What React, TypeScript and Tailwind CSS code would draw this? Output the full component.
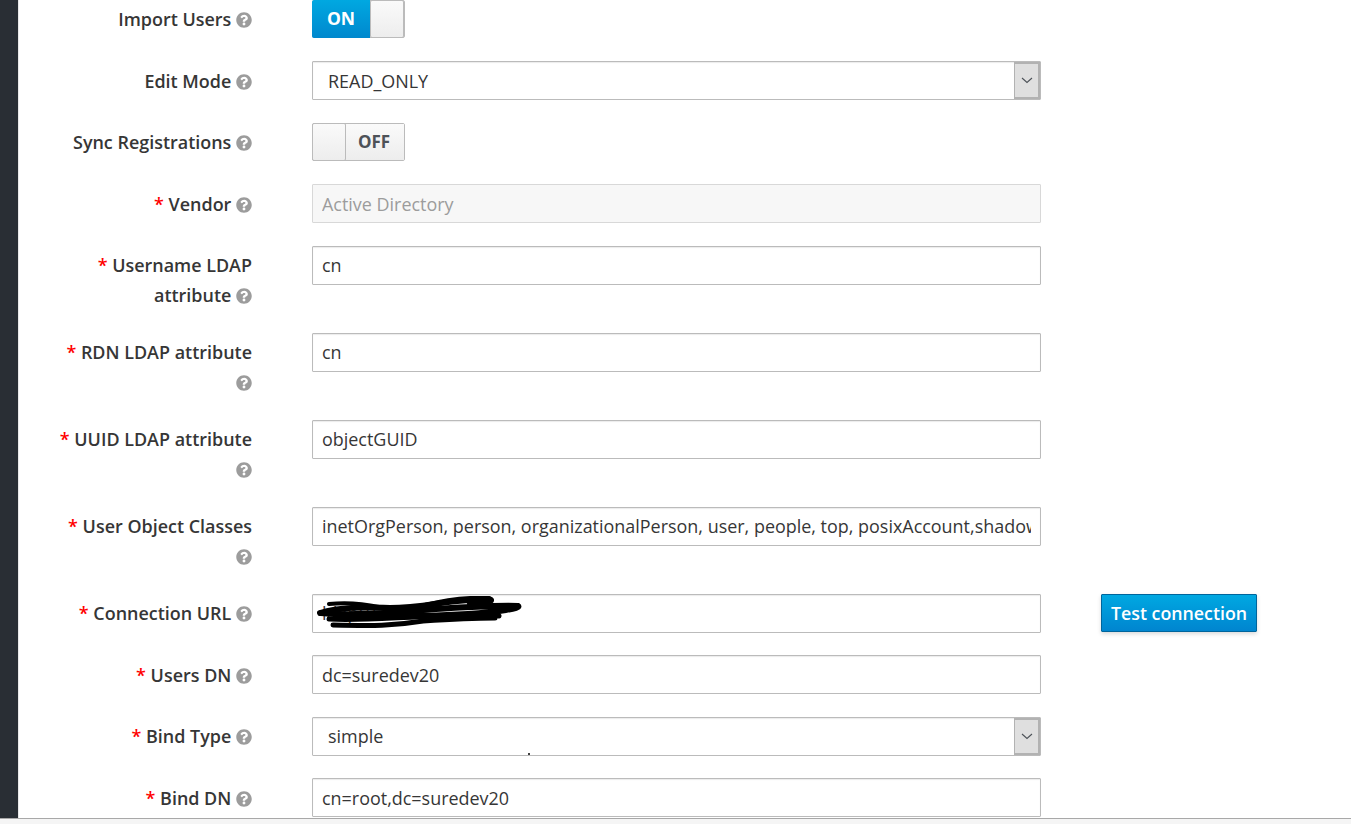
import React from "react";
import { FaQuestionCircle } from "react-icons/fa";

const inputBase = "h-[39px] w-[729px] border border-[#bbbbbb] rounded-[1px] text-[17.95px] leading-[37px] px-[9px] shadow-[inset_0_1px_1px_rgba(3,3,3,0.08)]";

function Label({ text, required, wrapIcon }: { text: React.ReactNode; required?: boolean; wrapIcon?: boolean }) {
  return (
    <label className="block w-[233px] shrink-0 text-right text-[17.95px] leading-[30px] font-semibold text-[#363636] pt-[4.45px] pb-[0.05px]">
      {required && <span className="text-[#ff0000]">* </span>}
      {text}
      {wrapIcon ? <br /> : " "}
      <FaQuestionCircle className="inline-block w-[16px] h-[16px] text-[#9c9c9c] align-[-2px]" />
    </label>
  );
}

function TextField({ value, disabled }: { value: string; disabled?: boolean }) {
  return (
    <div className={`${inputBase} ${disabled ? "bg-[#f7f7f7] text-[#9c9c9c] shadow-none border-[#d8d8d8]" : "bg-white text-[#363636]"}`}>
      <div className="overflow-hidden whitespace-nowrap pt-[0.45px]">{value}</div>
    </div>
  );
}

function SelectField({ value }: { value: string }) {
  return (
    <div className={`${inputBase} bg-white text-[#363636] flex justify-between !pr-0`}>
      <span className="pl-[6px] pt-[0.45px]">{value}</span>
      <span className="w-[26px] h-[37px] bg-[#dfdfdf] border-2 border-l border-[#b2b2b2] flex items-center justify-center">
        <svg width="12" height="7" viewBox="0 0 12 7" fill="none" stroke="#4d5258" strokeWidth="1.1">
          <path d="M1 1l5 4.5L11 1" />
        </svg>
      </span>
    </div>
  );
}

function Toggle({ on }: { on: boolean }) {
  return (
    <div className="h-[38px] w-[93px] flex border border-[#bbbbbb] rounded-[2px] font-bold">
      {on ? (
        <>
          <span className="w-[58px] -my-px -ml-px pb-[1px] text-[17.5px] bg-gradient-to-b from-[#00a8e1] to-[#0088ce] text-white flex items-center justify-center rounded-l-[2px]">ON</span>
          <span className="flex-1 -my-px border border-[#bbbbbb] rounded-[2px] bg-gradient-to-b from-[#fafafa] to-[#ededed]" />
        </>
      ) : (
        <>
          <span className="w-[34px] -my-px -ml-px border border-[#bbbbbb] rounded-[2px] bg-gradient-to-b from-[#fafafa] to-[#ededed]" />
          <span className="flex-1 pb-[1px] pr-[2px] text-[17px] bg-gradient-to-b from-[#fafafa] to-[#ededed] text-[#4d5258] flex items-center justify-center">OFF</span>
        </>
      )}
    </div>
  );
}

function Row({ label, required, wrapIcon, children }: { label: React.ReactNode; required?: boolean; wrapIcon?: boolean; children: React.ReactNode }) {
  return (
    <div className="flex gap-[60px] min-h-[39px] mb-[22.5px]">
      <Label text={label} required={required} wrapIcon={wrapIcon} />
      {children}
    </div>
  );
}

export default function App() {
  return (
    <div className="h-[824px] overflow-hidden bg-[#f5f5f5] flex flex-col" style={{ fontFamily: '"Open Sans", sans-serif' }}>
      <div className="h-[819px] shrink-0 flex border-b border-[#a8a8a8] overflow-hidden">
        <div className="w-[18px] shrink-0 bg-[#292e34]" />
        <div className="flex-1 bg-white border-l border-[#e8e8e8] relative -mt-[0.25px]">
          <Row label="Import Users"><Toggle on /></Row>
          <Row label="Edit Mode"><SelectField value="READ_ONLY" /></Row>
          <Row label="Sync Registrations"><Toggle on={false} /></Row>
          <Row label="Vendor" required><TextField value="Active Directory" disabled /></Row>
          <Row label="Username LDAP attribute" required><TextField value="cn" /></Row>
          <Row label="RDN LDAP attribute" required wrapIcon><TextField value="cn" /></Row>
          <Row label="UUID LDAP attribute" required wrapIcon><TextField value="objectGUID" /></Row>
          <Row label="User Object Classes" required wrapIcon>
            <TextField value="inetOrgPerson, person, organizationalPerson, user, people, top, posixAccount,shadowAccount" />
          </Row>
          <Row label="Connection URL" required>
            <div className="relative">
              <TextField value="ldap://" />
              {/* scribbled out by hand in the screenshot */}
              <svg className="absolute left-[3px] top-[2px]" width="212" height="32" viewBox="0 0 212 32" fill="none" stroke="#000" strokeLinecap="round">
                <path strokeWidth="6" d="M5 17c20-6 40-6 70-5 35 0 60-9 98-9 8 1 0 4-18 5" />
                <path strokeWidth="6" d="M6 17c40 4 90-3 130-5 25-1 48-3 67-2 4 2-20 6-50 8-30 2-70 3-105 2" />
                <path strokeWidth="5" d="M14 23c30 2 70-2 110-3 20-1 48-2 60 0" />
                <path strokeWidth="5" d="M18 29c40 1 60 1 90-4 15-1 45-3 72-3" />
                <path strokeWidth="4" d="M14 8c20-2 36 0 50 3M110 9c20-5 45-8 64-7" />
              </svg>
            </div>
            <button className="h-[38px] w-[156px] pt-[1px] border border-[#00659c] rounded-[1px] bg-gradient-to-b from-[#00a8e1] to-[#0085cf] text-white text-[17.8px] font-semibold shadow-[0_2px_4px_rgba(0,0,0,0.15)]">
              Test connection
            </button>
          </Row>
          <Row label="Users DN" required><TextField value="dc=suredev20" /></Row>
          <Row label="Bind Type" required>
            <div className="relative">
              <SelectField value="simple" />
              <span className="absolute left-[216px] top-[36px] w-[2px] h-[2px] bg-black rounded-full" />
            </div>
          </Row>
          <Row label="Bind DN" required><TextField value="cn=root,dc=suredev20" /></Row>
        </div>
      </div>
    </div>
  );
}
